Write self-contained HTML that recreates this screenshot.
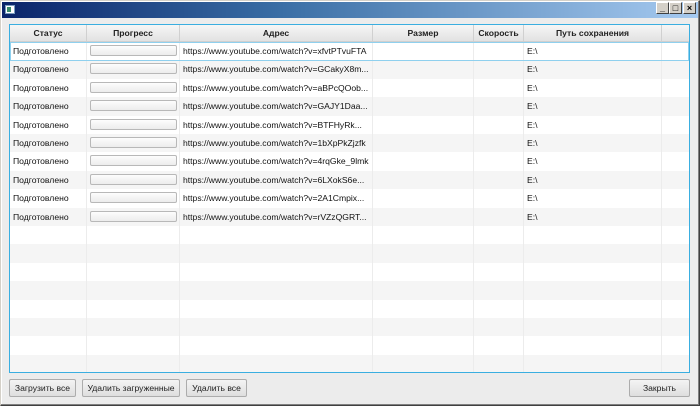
<!DOCTYPE html>
<html><head><meta charset="utf-8"><style>
*{box-sizing:border-box;margin:0;padding:0}
body{width:700px;height:406px;overflow:hidden;background:#ececec;font-family:"Liberation Sans",sans-serif;font-size:8.6px;color:#111;position:relative}
.win{position:absolute;left:0;top:0;width:700px;height:406px;border:1px solid #d4d0c8;border-right-color:#404040;border-bottom-color:#404040;box-shadow:inset -1px -1px 0 #808080,inset 1px 1px 0 #fff}
.title{position:absolute;left:2px;top:2px;width:696px;height:16px;background:linear-gradient(to right,#0a246a,#3a6ea5 40%,#a6caf0)}
.ico{position:absolute;left:3px;top:3px;width:10px;height:9px;background:#fff;border:1px solid #7a9cc0}
.ico:after{content:"";position:absolute;left:1px;top:1px;width:4px;height:5px;background:#3a8a6a}
.tb{position:absolute;top:2px;width:13px;height:12px;background:#d4d0c8;border:1px solid;border-color:#fff #404040 #404040 #fff;font-size:9px;font-weight:bold;text-align:center;line-height:10px;color:#000}
.tbl{position:absolute;left:9px;top:24px;width:681px;height:349px;border:1px solid #3aaee0;background:#fff;overflow:hidden}
.hd{position:absolute;left:0;top:0;height:17px;width:100%;background:linear-gradient(#f6f6f6,#e2e2e2);border-bottom:1px solid #cfcfcf}
.hc{position:absolute;top:0;height:16px;line-height:16px;text-align:center;font-weight:bold;color:#222;border-right:1px solid #d0d0d0}
.row{position:absolute;left:0;width:100%;height:18.4px}
.c{position:absolute;top:0;height:100%;line-height:18px;border-right:1px solid #ececec;padding-left:3px;white-space:nowrap;overflow:hidden}
.pb{position:absolute;left:3px;top:3px;width:87px;height:11px;border:1px solid #b8b8b8;border-radius:2px;background:linear-gradient(#fdfdfd,#ececec)}
.sel{position:absolute;left:0;top:17px;width:679px;height:19px;border:1px solid #8fd0ee}
.btn{position:absolute;top:379px;height:18px;border:1px solid #acacac;border-radius:2px;background:linear-gradient(#f4f4f4,#dedede);text-align:center;line-height:16px;color:#222}
</style></head><body>
<div class="win"></div>
<div class="title"><div class="ico"></div></div>
<div class="tb" style="left:656px">_</div>
<div class="tb" style="left:669px">□</div>
<div class="tb" style="left:683px">×</div>
<div class="tbl">
<div class="hd">
<div class="hc" style="left:0;width:77px">Статус</div>
<div class="hc" style="left:77px;width:93px">Прогресс</div>
<div class="hc" style="left:170px;width:193px">Адрес</div>
<div class="hc" style="left:363px;width:101px">Размер</div>
<div class="hc" style="left:464px;width:50px">Скорость</div>
<div class="hc" style="left:514px;width:138px">Путь сохранения</div>
</div>
<div id="rows"></div>
<div class="sel"></div>
</div>
<div class="btn" style="left:9px;width:67px">Загрузить все</div>
<div class="btn" style="left:82px;width:98px">Удалить загруженные</div>
<div class="btn" style="left:186px;width:61px">Удалить все</div>
<div class="btn" style="left:629px;width:61px">Закрыть</div>
<script>
var u=["xfvtPTvuFTA","GCakyX8m...","aBPcQOob...","GAJY1Daa...","BTFHyRk...","1bXpPkZjzfk","4rqGke_9lmk","6LXokS6e...","2A1Cmpix...","rVZzQGRT..."];
var h="";
for(var i=0;i<18;i++){
 var t=17+i*18.4,bg=i%2?"#f5f5f5":"#fff";
 h+='<div class="row" style="top:'+t+'px;background:'+bg+'">';
 var d=i<10;
 h+='<div class="c" style="left:0;width:77px">'+(d?'Подготовлено':'')+'</div>';
 h+='<div class="c" style="left:77px;width:93px">'+(d?'<div class="pb"></div>':'')+'</div>';
 h+='<div class="c" style="left:170px;width:193px">'+(d?'https://www.youtube.com/watch?v='+u[i]:'')+'</div>';
 h+='<div class="c" style="left:363px;width:101px"></div>';
 h+='<div class="c" style="left:464px;width:50px"></div>';
 h+='<div class="c" style="left:514px;width:138px">'+(d?'E:\\':'')+'</div>';
 h+='</div>';
}
document.getElementById('rows').innerHTML=h;
</script>
</body></html>
